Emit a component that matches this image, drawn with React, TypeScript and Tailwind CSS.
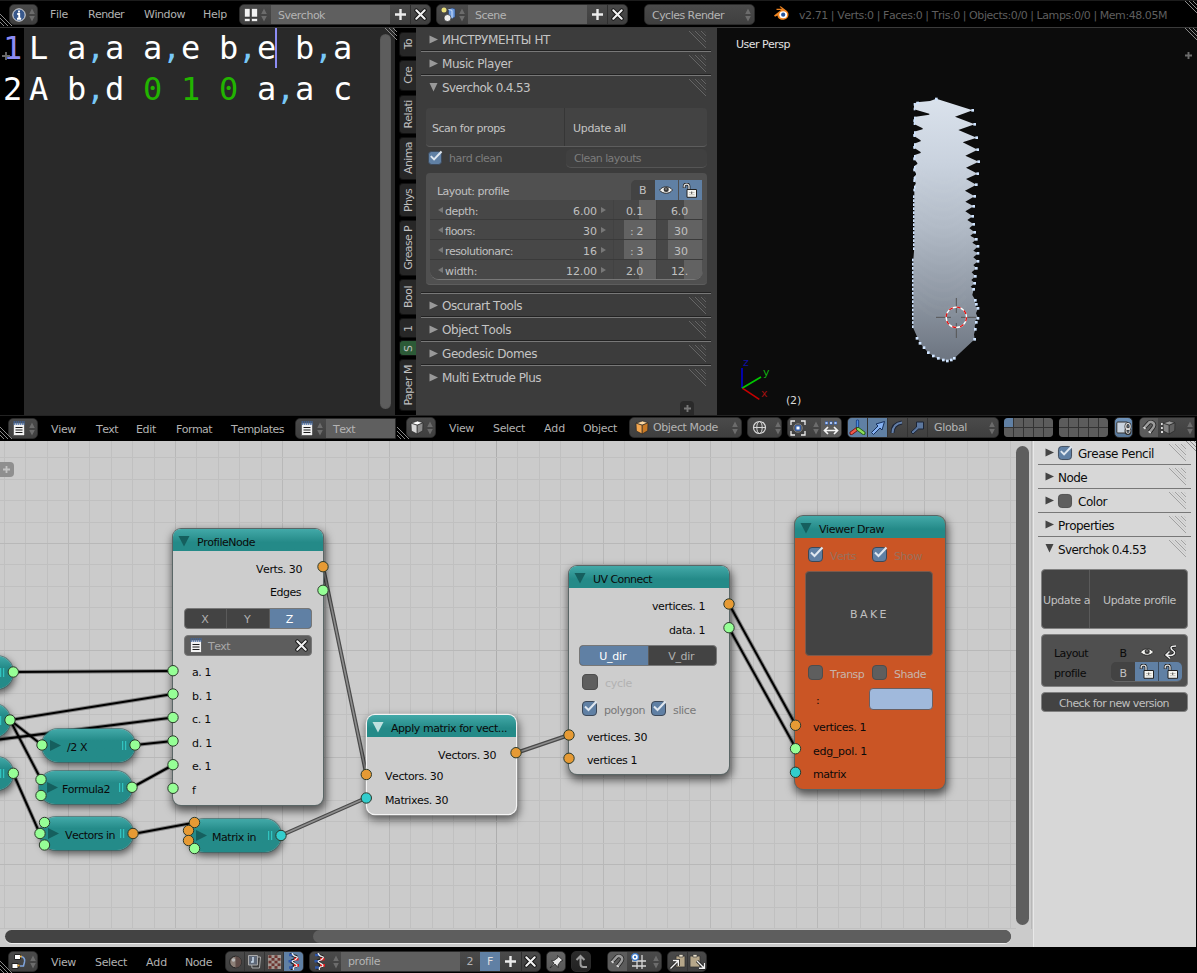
import React from "react";

const SANS = '"DejaVu Sans", sans-serif';
const MONO = '"DejaVu Sans Mono", monospace';
const ctx = document.createElement("canvas").getContext("2d")!;

function measure(s: string, size: number, family: string) {
  ctx.font = `${size}px ${family}`;
  return ctx.measureText(s).width;
}

/* Whole-pixel glyph advances, averaged over the string as tracking. */
function tracking(s: string, size: number, family: string) {
  let snapped = 0;
  let natural = 0;
  for (const c of s) {
    snapped += Math.floor((measure(c, 200, family) * size) / 200 + 0.02);
    natural += measure(c, size, family);
  }
  return (snapped - natural) / s.length;
}

type TProps = { children: string; size?: number; mono?: boolean; className?: string };
function T({ children, size = 11, mono = false, className = "" }: TProps) {
  const family = mono ? MONO : SANS;
  return (
    <span
      className={"block whitespace-pre [font-kerning:none] [font-variant-ligatures:none] " + className}
      style={{ fontSize: size, fontFamily: family, letterSpacing: tracking(children, size, family) }}
    >
      {children}
    </span>
  );
}

type Box = { className?: string; children?: React.ReactNode };

function Group({ className = "", children }: Box) {
  return (
    <div className={"flex h-[21px] shrink-0 overflow-hidden rounded-[5px] border border-[#2a2a2a] bg-linear-to-b from-[#4a4a4a] to-[#3f3f3f] text-[#b4b4b4] " + className}>
      {children}
    </div>
  );
}
function Cell({ className = "", children }: Box) {
  return <div className={"flex h-full shrink-0 items-center justify-center " + className}>{children}</div>;
}
function UpDown() {
  return (
    <svg className="ml-[3px] shrink-0" width="6" height="14" viewBox="0 0 6 14" fill="#6c6c6c">
      <path d="M3 0.5 5.8 6H.2zM3 13.5 5.8 8H.2z" />
    </svg>
  );
}
function Corner({ flip = false, className = "" }: { flip?: boolean; className?: string }) {
  return (
    <svg className={"absolute " + className} width="12" height="12" viewBox="0 0 12 12" stroke="#8b8b8b" strokeWidth="1" fill="none">
      {flip ? <path d="M0 0 12 12M4 0l8 8M8 0l4 4" /> : <path d="M0 0 12 12M0 4l8 8M0 8l4 4" />}
    </svg>
  );
}
function Plus({ s = 11, c = "#ececec", w = 2.4 }: { s?: number; c?: string; w?: number }) {
  return (
    <svg width={s} height={s} viewBox="0 0 11 11" stroke={c} strokeWidth={w}>
      <path d="M5.5 0v11M0 5.5h11" />
    </svg>
  );
}
function Cross() {
  return (
    <svg width="13" height="13" viewBox="0 0 13 13" strokeLinecap="round">
      <path d="M2.3 2.3l8.4 8.4M10.7 2.3l-8.4 8.4" stroke="#111" strokeWidth="4" />
      <path d="M2.3 2.3l8.4 8.4M10.7 2.3l-8.4 8.4" stroke="#f2f2f2" strokeWidth="2.1" />
    </svg>
  );
}
function Eye() {
  return (
    <svg width="14" height="10" viewBox="0 0 14 10">
      <path d="M.5 5.2C3 1.2 10 .2 13.5 5 10.500 9.300 4 9.300.5 5.200z" fill="#f1f1ee" stroke="#222" strokeWidth=".9" />
      <circle cx="7.200" cy="4.600" r="2.500" fill="#3a3a3a" />
      <circle cx="7" cy="4" r=".8" fill="#aaa" />
    </svg>
  );
}
function Lock() {
  return (
    <svg width="16" height="15" viewBox="0 0 16 15">
      <path d="M2.200 5V3.200Q2.200 1 4.600 1T7 3.200V7" fill="none" stroke="#222" strokeWidth="2.800" />
      <path d="M2.200 4.600V3.200Q2.200 1.200 4.600 1.200T7 3.200V7" fill="none" stroke="#e4e4e4" strokeWidth="1.300" />
      <path d="M5 6.500h9.500v7.800H5z" fill="#f4f4f0" stroke="#222" />
      <path d="M7 9.500h5.500M7 11.700h5.500" stroke="#b8b4aa" strokeWidth=".8" />
      <path d="M9.700 8.500v2.500" stroke="#555" />
    </svg>
  );
}
function TextDoc() {
  return (
    <svg width="14" height="17" viewBox="0 0 14 17">
      <path d="M1.500 3h11v11.500l-1 1h-10z" fill="#f2f2f2" stroke="#555" strokeWidth=".8" />
      <path d="M2.200 1v4M4.200 1v4M6.200 1v4M8.200 1v4M10.200 1v4M12 1v4" stroke="#40659c" strokeWidth="1.100" />
      <path d="M3.500 7.500h7M3.500 10h7M3.500 12.500h7" stroke="#1c1c1c" strokeWidth="1.100" />
    </svg>
  );
}
function Cube({ a, b, c }: { a: string; b: string; c: string }) {
  return (
    <svg width="14" height="15" viewBox="0 0 14 15" stroke="#222" strokeWidth=".6" strokeLinejoin="round">
      <path d="M1 3.200 7.500 1 13 2.800 7.200 5.200z" fill={a} />
      <path d="M1 3.200 7.200 5.200V14L1.400 11z" fill={b} />
      <path d="M13 2.800 7.200 5.200V14l5.500-3.300z" fill={c} />
    </svg>
  );
}
function Magnet() {
  return (
    <svg width="15" height="15" viewBox="0 0 15 15" fill="none">
      <path d="M2 8 6 3.600C9-.2 14 3.500 11.300 7.500L7.500 12.500" stroke="#1e1e1e" strokeWidth="4" />
      <path d="M2 8 6 3.600C9-.2 14 3.500 11.300 7.500L7.500 12.500" stroke="#9b9b9b" strokeWidth="2.500" />
      <path d="M1.500 7.200l2 1.800M6.600 11.300l2.200 1.700" stroke="#ddd" strokeWidth="1.500" />
    </svg>
  );
}
function Helix() {
  return (
    <svg className="shrink-0" width="13" height="17" viewBox="0 0 13 17" fill="none">
      <path d="M4 0q1 3 4 3t-1 4q-5 1-1 3t3 3q-4 0-4 4" stroke="#222" strokeWidth="3" />
      <path d="M2 2h4.500M1.500 8.300h4.500M2 14.500h4" stroke="#2d56a8" strokeWidth="2.400" />
      <path d="M7 6.200h4.500M7 12.300h5" stroke="#e01c1c" strokeWidth="2.800" />
      <path d="M5 0q1 3 4 3.500t-1 3.500q-5 1-1 3t2.500 3.500q-4 0-3 3.500" stroke="#f2f2f2" strokeWidth="1.200" />
    </svg>
  );
}
function Check({ on = false, s = 15, className = "" }: { on?: boolean; s?: number; className?: string }) {
  return (
    <svg className={"shrink-0 " + className} width={s} height={s} viewBox="0 0 15 15" overflow="visible">
      <rect x=".5" y=".5" width="14" height="14" rx="3.500" fill={on ? "#6080a4" : "#5e5e5e"} stroke={on ? "#3c4858" : "#4d4d4d"} />
      {on && <path d="M3 5.500 6.500 9 14.500 0.500" fill="none" stroke="#dfe7f0" strokeWidth="2.100" />}
    </svg>
  );
}
function Logo() {
  return (
    <svg width="17" height="15" viewBox="0 0 17 15">
      <path d="M1 9.500 8 4H3.500V2.800H9L6.500.8l1.200-.6L14 5c3 3 1.500 8-3.300 8.800C7 14.200 4.500 12 4.500 9.500L2 10.800z" fill="#ef8420" />
      <ellipse cx="10.200" cy="8.800" rx="3.900" ry="3.500" fill="#fff" />
      <circle cx="10.200" cy="8.700" r="2.100" fill="#25549c" />
    </svg>
  );
}

/* ---------- top header ---------- */
function InfoHeader() {
  return (
    <div className="relative flex h-[27px] shrink-0 items-start border-t border-[#1c1c1c] bg-black pt-[3px] text-[#b2b2b2]">
      <Corner className="top-[13px] left-0" />
      <Corner flip className="top-0 right-0" />
      <Group className="ml-[9px] w-[29px] items-center justify-center">
        <svg width="14" height="14" viewBox="0 0 14 14">
          <circle cx="7" cy="7" r="6.200" fill="#38588c" stroke="#e4e4e4" strokeWidth="1" />
          <path d="M7 2.600v2M5.200 6h2v4.500M5 10.700h4.200" stroke="#fff" strokeWidth="1.900" fill="none" />
        </svg>
        <UpDown />
      </Group>
      <T className="ml-3 w-[38px] leading-[22px]">File</T>
      <T className="w-14 leading-[22px]">Render</T>
      <T className="w-[59px] leading-[22px]">Window</T>
      <T className="w-9 leading-[22px]">Help</T>
      <Group className="w-[192px]">
        <Cell className="w-[31px]">
          <svg width="14" height="14" viewBox="0 0 14 14">
            <path d="M.5.5h5.500v8.500H.5zM7.500.5h6v8.500h-6zM.5 10.500h5.500v3H.5zM7.500 10.500h6v3h-6z" fill="#f1f1f1" stroke="#222" strokeWidth=".5" />
          </svg>
          <UpDown />
        </Cell>
        <Cell className="w-[119px] justify-start! bg-[#5f5f5f] pl-[7px]"><T className="mt-px leading-[19px]">Sverchok</T></Cell>
        <Cell className="w-[21px] border-r border-[#2e2e2e]"><Plus /></Cell>
        <Cell className="w-[18px]"><Cross /></Cell>
      </Group>
      <Group className="ml-[5px] w-[192px]">
        <Cell className="w-[31px]">
          <svg width="15" height="15" viewBox="0 0 15 15">
            <circle cx="3" cy="3" r="2.500" fill="#eadf7a" />
            <path d="M7.500 2.500 11 1l3 1v8l-3 1.500-3.500-1z" fill="#6a98dc" stroke="#1e3560" strokeWidth=".5" />
            <path d="M7.500 2.500l3.500.8v8" fill="none" stroke="#cfe1fb" />
            <circle cx="6.500" cy="11" r="3.500" fill="#eee" stroke="#222" strokeWidth=".6" />
          </svg>
          <UpDown />
        </Cell>
        <Cell className="w-[119px] justify-start! bg-[#5f5f5f] pl-[7px]"><T className="mt-px leading-[19px]">Scene</T></Cell>
        <Cell className="w-[21px] border-r border-[#2e2e2e]"><Plus /></Cell>
        <Cell className="w-[18px]"><Cross /></Cell>
      </Group>
      <Group className="ml-4 w-[111px] items-center justify-between pr-[3px] pl-[7px]">
        <T className="mt-px leading-[19px]">Cycles Render</T>
        <UpDown />
      </Group>
      <div className="mt-[2px] ml-[18px] w-[26px]"><Logo /></div>
      <T className="leading-[23px] text-[#5e5e5e]">v2.71 | Verts:0 | Faces:0 | Tris:0 | Objects:0/0 | Lamps:0/0 | Mem:48.05M</T>
    </div>
  );
}

/* ---------- text editor ---------- */
const CODE: { cls: string; parts: [string, string][] }[] = [
  { cls: "1", parts: [["L a", "w"], [",", "c"], ["a a", "w"], [",", "c"], ["e b", "w"], [",", "c"], ["e b", "w"], [",", "c"], ["a", "w"]] },
  { cls: "2", parts: [["A b", "w"], [",", "c"], ["d ", "w"], ["0 1 0", "n"], [" a", "w"], [",", "c"], ["a c", "w"]] },
];
const TOKEN: Record<string, string> = { w: "text-white", c: "text-[#78c8f8]", n: "text-[#22b400]" };

function TextEditor() {
  return (
    <div className="relative flex h-[388px] w-[397px] shrink-0 border-t border-[#3a3a3a] bg-[#292929]">
      <div className="flex w-6 flex-col bg-black pl-[3px]">
        <T mono size={32} className="h-[41px] leading-[41px] text-[#8c8cf4]">1</T>
        <T mono size={32} className="h-[41px] leading-[41px] text-white">2</T>
      </div>
      <div className="flex flex-col pl-[5px]">
        {CODE.map((l) => (
          <div key={l.cls} className="flex h-[41px]">
            {l.parts.map(([s, k], i) => (
              <T key={i} mono size={32} className={"leading-[41px] " + TOKEN[k]}>{s}</T>
            ))}
          </div>
        ))}
      </div>
      <div className="absolute top-0 left-[275px] h-[40px] w-[2px] bg-[#8c8cf4]" />
      <div className="absolute top-[24px] left-[2px]"><Plus s={8} c="#6a6a6a" w={2.600} /></div>
      <Corner flip className="top-0 right-0" />
      <div className="mt-[6px] mr-1 ml-auto h-[375px] w-[11px] rounded-full bg-[#5d5d5d] shadow-[inset_0_0_1px_#333]" />
      <div className="w-[2px] bg-black" />
    </div>
  );
}

/* ---------- tool shelf ---------- */
const TABS: [string, string][] = [
  ["To", "mt-[4px] h-[25px]"],
  ["Cre", "mt-[3px] h-[31px]"],
  ["Relati", "mt-[4px] h-[39px]"],
  ["Anima", "mt-[3px] h-[43px]"],
  ["Phys", "mt-[3px] h-[34px]"],
  ["Grease P", "mt-[3px] h-[56px]"],
  ["Bool", "mt-[3px] h-[36px]"],
  ["1", "mt-[3px] h-[20px]"],
  ["S", "mt-[2px] h-[16px]"],
  ["Paper M", "mt-[3px] h-[52px]"],
];

function Grip({ c = "#777" }: { c?: string }) {
  return (
    <svg className="mt-[3px] ml-auto" width="18" height="17" viewBox="0 0 18 17" stroke={c} strokeWidth="1" fill="none">
      <path d="M0 0l17 17M6 0l11 11M12 0l5 5" />
      <path d="M3 0l14 14M9 0l8 8M15 0l2 2" strokeOpacity=".25" />
    </svg>
  );
}
function Tri({ open, c }: { open?: boolean; c: string }) {
  return (
    <svg className="mt-[7px] mr-1 shrink-0" width="9" height="9" viewBox="0 0 9 9" fill={c}>
      {open ? <path d="M.5 0h8L4.500 8.500z" /> : <path d="M.5.500 9 4.500.5 8.500z" />}
    </svg>
  );
}
function Panel({ title, open, sep = true, className = "", check }: { title: string; open?: boolean; sep?: boolean; className?: string; check?: "on" | "off" }) {
  const light = check !== undefined || className.includes("light");
  return (
    <div className={"flex h-6 w-full shrink-0 items-start " + (sep ? (light ? "border-b border-[#777] " : "border-b border-[#787878] shadow-[inset_0_-1px_0_#222] ") : "")}>
      <div className={light ? "flex w-full pl-[7px]" : "flex w-full pl-2"}>
        <Tri open={open} c={light ? "#444" : "#999"} />
        {check && <Check on={check === "on"} s={14} className="mt-[5px] mr-[6px]" />}
        <T size={12} className={light ? "leading-[27px] text-[#0c0c0c]" : "leading-[25px] text-[#c4c4c4]"}>{title}</T>
        <Grip c={light ? "#a0a0a0" : "#666"} />
        <div className="w-1" />
      </div>
    </div>
  );
}

function PropRow({ name, value, a, b, int, last }: { name: string; value: string; a: string; b: string; int?: boolean; last?: boolean }) {
  return (
    <div className={"flex h-5 overflow-hidden border-b " + (last ? "rounded-b-[9px] border-[#777]" : "border-[#3a3a3a]")}>
      <div className="flex w-[183px] items-start bg-[#474747] pr-[7px] pl-2">
        <svg width="5" height="6" viewBox="0 0 5 6" fill="#777" className="mt-[7px]"><path d="M5 0v6L0 3z" /></svg>
        <T className="ml-[2px] leading-[24px]">{name}</T>
        <T className="ml-auto leading-[24px]">{value}</T>
        <svg width="5" height="6" viewBox="0 0 5 6" fill="#777" className="mt-[7px] ml-1"><path d="M0 0v6L5 3z" /></svg>
      </div>
      <div className={"flex w-[44px] border-x border-[#424242] " + (int ? "bg-linear-to-r from-[#474747] from-[10px] to-[#626262] to-[10px] pl-4" : "bg-linear-to-r from-[#474747] from-[25px] to-[#626262] to-[25px] pl-[12px]")}>
        <T className="leading-[24px]">{a}</T>
      </div>
      <div className={"flex w-[45px] " + (int ? "bg-linear-to-r from-[#474747] from-[11px] to-[#626262] to-[11px] pl-[17px]" : "bg-linear-to-r from-[#474747] from-[27px] to-[#626262] to-[27px] pl-[14px]")}>
        <T className="leading-[24px]">{b}</T>
      </div>
    </div>
  );
}

function ToolShelf() {
  return (
    <div className="flex h-[388px] w-[320px] shrink-0 border-t border-[#3a3a3a] bg-black">
      <div className="ml-[2px] flex w-[17px] flex-col">
        {TABS.map(([t, h]) => (
          <div key={t} className={"flex shrink-0 items-center justify-center rounded-l-[4px] border border-r-0 border-[#111] text-[#c0c0c0] " + (t === "S" ? "bg-[#2c5a37] " : "bg-[#272727] ") + h}>
            <T className="rotate-180 leading-[15px] [writing-mode:vertical-rl]">{t}</T>
          </div>
        ))}
      </div>
      <div className="relative flex w-[301px] flex-col bg-[#3c3c3c] pr-[6px] pl-[5px]">
        <Panel title="ИНСТРУМЕНТЫ НТ" />
        <Panel title="Music Player" />
        <Panel title="Sverchok 0.4.53" open sep={false} />
        <div className="flex h-[194px] flex-col border-b border-[#787878] pt-[8px] pr-1 pl-[5px] shadow-[inset_0_-1px_0_#222]">
          <div className="flex h-[39px] rounded-[4px] border-b border-[#5d5d5d] bg-[#434343] text-[#c4c4c4]">
            <T className="w-[139px] border-r border-[#363636] pl-[6px] leading-[42px]">Scan for props</T>
            <T className="pl-2 leading-[42px]">Update all</T>
          </div>
          <div className="mt-[2px] flex h-[19px] items-center text-[#7c7c7c]">
            <Check on s={14} className="-mt-px ml-[2px]" />
            <T className="ml-[7px] w-[117px] leading-[20px]">hard clean</T>
            <T className="h-[19px] w-[141px] rounded-[5px] border-b border-[#555] bg-[#404040] pl-2 leading-[20px]">Clean layouts</T>
          </div>
          <div className="mt-[5px] flex h-[112px] flex-col rounded-[4px] border-b border-[#5d5d5d] bg-[#505050] px-1 pt-[7px] text-[#c0c0c0]">
            <div className="flex h-5">
              <T className="w-[201px] pl-[7px] leading-[23px]">Layout: profile</T>
              <Cell className="w-6 rounded-tl-[5px] bg-[#434343] pr-px"><T className="mt-[2px]">B</T></Cell>
              <Cell className="mr-px w-[23px] bg-[#6080a4] pr-px"><Eye /></Cell>
              <Cell className="w-[23px] bg-[#6080a4] pr-px"><Lock /></Cell>
            </div>
            <PropRow name="depth:" value="6.00" a="0.1" b="6.0" />
            <PropRow name="floors:" value="30" a=": 2" b="30" int />
            <PropRow name="resolutionarc:" value="16" a=": 3" b="30" int />
            <PropRow name="width:" value="12.00" a="2.0" b="12." last />
          </div>
        </div>
        <Panel title="Oscurart Tools" />
        <Panel title="Object Tools" />
        <Panel title="Geodesic Domes" />
        <Panel title="Multi Extrude Plus" sep={false} />
        <div className="mt-auto mr-[17px] ml-auto flex h-[14px] w-[14px] items-center justify-center rounded-t-[4px] bg-[#2a2a2a]">
          <Plus s={7} c="#777" w={3} />
        </div>
      </div>
    </div>
  );
}

/* ---------- 3D viewport ---------- */
const TIPS = [[818, 91], [824, 133], [830, 173], [833, 209], [836, 245], [833, 281], [829, 314], [824, 349], [821, 379], [818, 409], [821, 433], [824, 457], [829, 478], [834, 499], [834, 520], [834, 544], [829, 565], [826, 589], [824, 610], [821, 628], [826, 661], [829, 673], [834, 685], [834, 715], [829, 727], [826, 748], [824, 778]];
const NOTCH = [[765, 110], [775, 150], [788, 187], [796, 227], [798, 263], [798, 297], [795, 332], [796, 365], [796, 394], [802, 420], [808, 445], [811, 467], [817, 488], [820, 512], [820, 532], [820, 555], [815, 577], [814, 600], [812, 620], [817, 645], [824, 667], [826, 679], [828, 700], [826, 721], [824, 738], [822, 763]];
const LEFT_NOTCH = [[688, 102], [668, 146], [662, 182], [662, 217], [652, 250], [648, 282], [647, 310]];

function buildOutline() {
  let d = "M642 72 L650 67 L690 63 L709 56";
  TIPS.forEach((t, i) => {
    d += ` L${t[0]} ${t[1]}`;
    if (NOTCH[i]) d += ` L${NOTCH[i][0]} ${NOTCH[i][1]}`;
  });
  d += " L763 835 L742 843 L712 836 L685 818 L660 790 L640 745 L640 540 L643 500 L643 330";
  for (let i = LEFT_NOTCH.length - 1; i >= 0; i--) {
    const [x, y] = LEFT_NOTCH[i];
    d += ` L642 ${y + 9} L${x} ${y + 2} L${x} ${y - 1} L642 ${y - 14}`;
  }
  return d + " Z";
}
const OUTLINE = buildOutline();
const EDGE_DOTS: number[][] = [
  ...TIPS,
  ...Array.from({ length: 17 }, (_, i) => [640, 540 + i * 12.500]),
  ...Array.from({ length: 14 }, (_, i) => [643, 350 + i * 12]),
  ...LEFT_NOTCH.flatMap(([, y]) => [[646, y + 12], [644, y + 20], [645, y - 15]]),
  [645, 73], [653, 69],
  [651, 775], [660, 790], [672, 803], [685, 818], [700, 828], [715, 835], [730, 840], [742, 843], [754, 840], [763, 835], [709, 57],
];

function Viewport() {
  return (
    <div className="relative h-[388px] w-[480px] shrink-0 border-t border-[#3a3a3a] bg-[#0c0c0c]">
      <svg className="absolute inset-0" width="480" height="387" viewBox="17 -52 480 387">
        <defs>
          <linearGradient id="skin" x1="0" y1="0" x2="0" y2="1">
            <stop offset="0" stopColor="#dae2ec" />
            <stop offset=".25" stopColor="#c9d2de" />
            <stop offset=".5" stopColor="#b0b9c5" />
            <stop offset=".75" stopColor="#8f98a4" />
            <stop offset="1" stopColor="#6c7480" />
          </linearGradient>
        </defs>
        <g transform="scale(.33333)">
          <path d={OUTLINE} fill="url(#skin)" />
          <g fill="none" stroke="#fff" strokeOpacity=".02" strokeWidth="12">
            {Array.from({ length: 16 }, (_, i) => (
              <path key={i} d={`M645 ${260 + i * 27} Q730 ${350 + i * 27} 797 ${270 + i * 27}`} />
            ))}
          </g>
          <g fill="#cfe4ff">
            {EDGE_DOTS.map(([x, y], i) => (
              <rect key={i} x={x - 4} y={y - 4} width={x < 650 ? 5 : 8} height="8" />
            ))}
          </g>
          <path d="M769 654v45M769 729v45M708 712h45M783 712h45" stroke="#555" strokeWidth="3" />
          <circle cx="769" cy="712" r="30.500" fill="none" stroke="#fff" strokeWidth="4" />
          <circle cx="769" cy="712" r="30.500" fill="none" stroke="#e01010" strokeWidth="4" strokeDasharray="12 12" />
          <path d="M126 925V864" stroke="#0000c8" strokeWidth="5" />
          <path d="M126 925l57-34" stroke="#00c800" strokeWidth="5" />
          <path d="M128 925l50 33" stroke="#c80000" strokeWidth="5" />
        </g>
      </svg>
      <T className="absolute top-[10px] left-[19px] leading-[13px] text-[#e2e2e2]">User Persp</T>
      <T className="absolute top-[328px] left-[26px] leading-[13px] text-[#1010a0]">z</T>
      <T className="absolute top-[338px] left-[46px] leading-[13px] text-[#10b010]">y</T>
      <T className="absolute top-[359px] left-[44px] leading-[13px] text-[#a01010]">x</T>
      <T className="absolute top-[366px] left-[69px] leading-[13px] text-[#d8d8d8]">(2)</T>
      <div className="absolute top-[24px] right-[5px]"><Plus s={7} c="#6c6c6c" w={3} /></div>
      <Corner flip className="top-0 right-0" />
    </div>
  );
}

/* ---------- middle headers ---------- */
function Layers({ active, className = "" }: { active?: boolean; className?: string }) {
  return (
    <div className={"grid h-[19px] w-[49px] shrink-0 grid-cols-5 grid-rows-2 gap-px overflow-hidden rounded-[4px] bg-[#333] " + className}>
      {Array.from({ length: 10 }, (_, i) => (
        <div key={i} className={active && i === 0 ? "bg-[#6080a4]" : "bg-[#5c5c5c]"} />
      ))}
    </div>
  );
}

function MidHeaders() {
  return (
    <div className="flex h-[26px] shrink-0 items-start border-t border-[#222] bg-black text-[#b2b2b2]">
      <div className="relative flex h-[25px] w-[397px] shrink-0 items-start pt-[2px]">
        <Corner className="bottom-[2px] left-0" />
        <Group className="ml-[8px] w-[30px] items-center justify-center"><TextDoc /><UpDown /></Group>
        <T className="ml-[13px] w-[45px] leading-[24px]">View</T>
        <T className="w-10 leading-[24px]">Text</T>
        <T className="w-10 leading-[24px]">Edit</T>
        <T className="w-[55px] leading-[24px]">Format</T>
        <T className="w-[64px] leading-[24px]">Templates</T>
        <Group className="w-[101px] rounded-r-none">
          <Cell className="w-[30px]"><TextDoc /><UpDown /></Cell>
          <Cell className="w-[71px] justify-start! bg-[#5f5f5f] pl-[7px]"><T className="mt-[2px] leading-[20px]">Text</T></Cell>
        </Group>
      </div>
      <div className="relative flex h-[25px] w-[800px] shrink-0 items-start pt-px">
        <Corner className="bottom-[2px] left-0" />
        <Group className="ml-[9px] w-[30px] items-center justify-center"><Cube a="#fff" b="#d8d8d8" c="#8c8c8c" /><UpDown /></Group>
        <T className="ml-[13px] w-11 leading-[23px]">View</T>
        <T className="w-[51px] leading-[23px]">Select</T>
        <T className="w-[39px] leading-[23px]">Add</T>
        <T className="w-[46px] leading-[23px]">Object</T>
        <Group className="w-[113px] items-center pr-[3px] pl-[5px]">
          <Cube a="#ffd9a0" b="#f3a64f" c="#c87a26" />
          <T className="mt-px mr-auto ml-1 leading-[20px]">Object Mode</T>
          <UpDown />
        </Group>
        <Group className="ml-[5px] w-[35px] items-center pl-1">
          <svg width="15" height="15" viewBox="0 0 15 15" fill="none" stroke="#d6d6d6">
            <circle cx="7.500" cy="7.500" r="6" strokeWidth="1.200" />
            <ellipse cx="7.500" cy="7.500" rx="2.700" ry="6" />
            <path d="M1.500 7.500h12" />
          </svg>
          <span className="w-[5px]" />
          <UpDown />
        </Group>
        <Group className="ml-[5px] w-[55px]">
          <Cell className="w-[33px]">
            <svg width="16" height="16" viewBox="0 0 16 16" fill="none">
              <path d="M1 5V1h4M11 1h4v4M15 11v4h-4M5 15H1v-4" stroke="#eee" strokeWidth="1.300" />
              <circle cx="8" cy="8" r="4.200" stroke="#888" />
              <path d="M5.800 5.800h4.400v4.400H5.800z" fill="#fff" stroke="#2c5cb0" strokeWidth="1.300" />
            </svg>
            <span className="w-1" />
            <UpDown />
          </Cell>
          <Cell className="w-5 bg-[#5c5c5c]">
            <svg width="16" height="16" viewBox="0 0 16 16" fill="none">
              <path d="M2 3h12" stroke="#2f62c0" strokeWidth="3" strokeDasharray="3 1.500" />
              <path d="M2 3h12" stroke="#dce8ff" strokeWidth="1.300" strokeDasharray="2 2.500" strokeDashoffset="-.5" />
              <path d="M5 7 1.500 10.500 5 14M11 7l3.500 3.500L11 14M2 10.500h12" stroke="#f4f4f4" strokeWidth="1.700" />
            </svg>
          </Cell>
        </Group>
        <Group className="ml-[5px] w-[152px]">
          <Cell className="w-[19px] bg-[#6080a4]">
            <svg width="17" height="17" viewBox="0 0 17 17" strokeLinecap="round">
              <path d="M8.500 9.500V2" stroke="#153a7a" strokeWidth="3.200" /><path d="M8.500 9.500V2" stroke="#4f8de0" strokeWidth="1.600" />
              <path d="M8 10l-5.500 4" stroke="#701010" strokeWidth="4" /><path d="M8 10l-5.500 4" stroke="#f05a4a" strokeWidth="2.200" />
              <path d="M9 10l5.500 4" stroke="#1d5a10" strokeWidth="4" /><path d="M9 10l5.500 4" stroke="#8ddc5a" strokeWidth="2.200" />
            </svg>
          </Cell>
          <Cell className="w-5 border-l border-[#333] bg-[#6080a4]">
            <svg width="16" height="16" viewBox="0 0 16 16"><path d="M1.500 12.500 8 6 6 4l8.500-2.500L12 10l-2-2-6.500 6.500z" fill="#86b2f2" stroke="#16305e" /></svg>
          </Cell>
          <Cell className="w-5 border-l border-[#333]">
            <svg width="15" height="15" viewBox="0 0 15 15" fill="none"><path d="M2.500 13Q2.500 4 12 2.500" stroke="#1b2436" strokeWidth="4" /><path d="M2.500 13Q2.500 4 12 2.500" stroke="#647fa8" strokeWidth="2" /></svg>
          </Cell>
          <Cell className="w-5 border-l border-[#333]">
            <svg width="15" height="15" viewBox="0 0 15 15"><path d="M1 12 6.500 7V2H13.500V9H8.500L3 14z" fill="#5c779e" stroke="#1b2436" /></svg>
          </Cell>
          <Cell className="w-[71px] justify-between! border-l border-[#333] pr-[3px] pl-[6px]"><T className="mt-px leading-[20px]">Global</T><UpDown /></Cell>
        </Group>
        <Layers active className="mt-px ml-[5px]" />
        <Layers className="mt-px ml-[6px]" />
        <Group className="ml-[6px] w-[19px] items-center justify-center from-[#6f93bb]! to-[#587798]!">
          <svg width="16" height="14" viewBox="0 0 16 14">
            <rect x=".8" y="1" width="11" height="11" rx="1" fill="#c9d3de" stroke="#333" />
            <ellipse cx="12" cy="5.500" rx="2.200" ry="3" fill="none" stroke="#333" strokeWidth="2.600" />
            <ellipse cx="12" cy="10" rx="2.200" ry="2.800" fill="none" stroke="#333" strokeWidth="2.600" />
            <ellipse cx="12" cy="5.500" rx="2.200" ry="3" fill="none" stroke="#eee" strokeWidth="1.100" />
            <ellipse cx="12" cy="9.800" rx="2" ry="2.600" fill="none" stroke="#ddd" strokeWidth="1" />
          </svg>
        </Group>
        <Group className="ml-[6px] w-[56px] rounded-r-none">
          <Cell className="w-[18px] bg-[#5c5c5c]"><Magnet /></Cell>
          <Cell className="w-[37px]">
            <span className="-mr-px grid gap-[2px]"><i className="block h-[2px] w-[2px] bg-[#ddd]" /><i className="block h-[2px] w-[2px] bg-[#ddd]" /><i className="block h-[2px] w-[2px] bg-[#ddd]" /></span>
            <Cube a="#9a9a9a" b="#848484" c="#626262" />
            <span className="w-[8px]" />
            <UpDown />
          </Cell>
        </Group>
      </div>
    </div>
  );
}

/* ---------- node editor ---------- */
const GRID_X = Array.from({ length: 49 }, (_, i) => Math.floor(4.300 + i * 21.400));
const GRID_Y = Array.from({ length: 24 }, (_, i) => Math.floor(-4.500 + i * 21.400));

type Link = [number, number, number, number, boolean?];
const LINKS: Link[] = [
  [13, 672, 173, 671], [10, 720, 173, 694], [-5, 740, 173, 717.500], [10, 720, 42, 745], [10, 720, 41, 779.500],
  [13, 773, 40, 834], [135, 745, 173, 741], [132, 787.500, 173, 765], [133, 834, 195, 822.500],
  [729, 604, 796, 725.500], [729, 628, 796, 748.500],
  [323, 567, 366.500, 775, true], [281, 835.500, 366, 798, true], [516, 753, 569, 735, true],
];
const G = "#96ff96";
const O = "#e69a34";
const C = "#32cdcd";
const SOCKETS: [number, number, string][] = [
  [13.300, 672, G], [10, 720, G], [13.300, 773.300, G], [42, 745, G], [135, 745, G], [41, 779.500, G], [41, 795.500, G], [132, 787.300, G],
  [44.500, 822.500, G], [40, 833.500, G], [44.500, 845, G], [133, 833.500, O],
  [194.500, 822.500, O], [188.500, 830.500, O], [188.500, 840.500, O], [194.500, 848.500, G], [281, 835.500, C],
  [323, 566.700, O], [323, 590.300, G], [173, 670.700, G], [173, 694, G], [173, 717.500, G], [173, 741, G], [173, 764.700, G], [173, 788.300, G],
  [516, 752.700, O], [366.300, 774.500, O], [366.300, 798, C],
  [729, 604, O], [729, 627.700, G], [569, 735, O], [569, 758.300, O],
  [795.500, 725.300, O], [795.500, 748.700, G], [795.500, 772.300, C],
];

function NodeBox({ title, className = "", selected, body = "bg-[#cdcdcd]", children }: { title: string; className?: string; selected?: boolean; body?: string; children: React.ReactNode }) {
  return (
    <div className={"absolute flex flex-col overflow-hidden rounded-[8px] text-[#0a0a0a] " + (selected ? "shadow-[0_0_0_1.200px_#f4f4f4,1px_4px_9px_2px_rgba(0,0,0,.55)] " : "shadow-[0_0_0_1px_#5a6666,1px_4px_9px_2px_rgba(0,0,0,.6)] ") + body + " " + className}>
      <div className="flex h-[22px] shrink-0 items-start bg-linear-to-b from-[#42a9a8] to-[#248a88] to-60%">
        <svg className="mt-[7px] ml-[5px]" width="12" height="11" viewBox="0 0 12 11"><path d="M.5 0h11L6 10.500z" fill={selected ? "#bfe0df" : "#155f5e"} /></svg>
        <T className="ml-[7px] leading-[28px]">{title}</T>
      </div>
      {children}
    </div>
  );
}

function Pill({ title, className = "", label = "" }: { title?: string; className?: string; label?: string }) {
  return (
    <div className={"absolute flex h-[33px] items-center rounded-[16px] bg-linear-to-b from-[#42aaa9] to-[#248b89] to-35% text-[#0a0a0a] shadow-[0_0_0_1px_rgba(40,100,100,.6),1px_3px_7px_1px_rgba(0,0,0,.55)] " + className}>
      {title && (
        <>
          <svg className="ml-[8px] shrink-0" width="11" height="11" viewBox="0 0 11 11"><path d="M0 0l11 5.500L0 11z" fill="#155f5e" /></svg>
          <T className={"leading-[13px] " + label}>{title}</T>
        </>
      )}
      <svg className="mr-[8px] ml-auto shrink-0" width="5" height="10" viewBox="0 0 5 10"><path d="M.7 0v9M3.700 0v9" stroke="#35d0cc" /></svg>
    </div>
  );
}

function Toggle({ items, active, className = "" }: { items: string[]; active: number; className?: string }) {
  return (
    <div className={"flex h-[21px] shrink-0 overflow-hidden rounded-[4px] border border-[#777] bg-[#434343] " + className}>
      {items.map((s, i) => (
        <Cell key={s} className={"flex-1 pr-[2px] " + (i === active ? "bg-[#6080a4] text-white" : "text-[#b0b0b0]") + (i ? " border-l border-[#5a5a5a]" : "")}>
          <T className="mt-[2px] leading-[19px]">{s}</T>
        </Cell>
      ))}
    </div>
  );
}

function NodeCanvas() {
  return (
    <div className="relative h-[506px] w-[1033px] shrink-0 overflow-hidden bg-[#cbcbcb]">
      <svg className="absolute inset-0" width="1033" height="506" shapeRendering="crispEdges">
        {GRID_X.map((x, i) => <rect key={x} x={x} y="0" width="1" height="488" fill={i === 23 ? "#aeaeae" : i % 5 === 3 ? "#b8b8b8" : "#c0c0c0"} />)}
        {GRID_Y.map((y, i) => <rect key={y} x="0" y={y} width="1016" height="1" fill={i % 5 === 0 ? "#b8b8b8" : "#c0c0c0"} />)}
      </svg>
      <svg className="absolute inset-0" width="1033" height="506" viewBox="0 441 1033 506">
        {LINKS.map(([a, b, c, d, grey], i) => (
          <g key={i}>
            <path d={`M${a} ${b}L${c} ${d}`} stroke={grey ? "#4a4a4a" : "#000"} strokeOpacity={grey ? 1 : 0.35} strokeWidth="4" />
            <path d={`M${a} ${b}L${c} ${d}`} stroke={grey ? "#8e8e8e" : "#000"} strokeWidth={grey ? 1.600 : 2} />
          </g>
        ))}
      </svg>

      <Pill className="top-[215px] -left-[80px] w-[93px]" />
      <Pill className="top-[263px] -left-[83px] w-[93px]" />
      <Pill className="top-[316px] -left-[80px] w-[93px]" />
      <Pill title="/2 X" label="ml-[6px] mt-[3px]" className="top-[288px] left-[42px] w-[93px]" />
      <Pill title="Formula2" label="ml-[4px] mt-[4px]" className="top-[330px] left-[39px] w-[93px]" />
      <Pill title="Vectors in" label="ml-[6px] mt-[4px]" className="top-[376px] left-[40px] w-[93px]" />
      <Pill title="Matrix in" label="ml-[5px] mt-[4px]" className="top-[378px] left-[188px] w-[93px]" />

      <NodeBox title="ProfileNode" className="top-[88px] left-[173px] h-[276px] w-[150px]">
        <T className="mt-[9px] mr-[21px] ml-auto h-5 leading-5">Verts. 30</T>
        <T className="mt-[3px] mr-[22px] ml-auto h-5 leading-5">Edges</T>
        <Toggle items={["X", "Y", "Z"]} active={2} className="mt-[5px] mr-[11px] ml-[11px]" />
        <div className="mx-[11px] mt-[6px] flex h-[21px] shrink-0 items-center rounded-[4px] border border-[#777] bg-[#5d5d5d] pr-[3px] pl-1">
          <TextDoc />
          <T className="mt-[2px] mr-auto ml-[5px] leading-[19px] text-[#a8a8a8]">Text</T>
          <Cross />
        </div>
        <div className="mt-[5px] ml-[19px]">
          {["a. 1", "b. 1", "c. 1", "d. 1", "e. 1", "f"].map((s) => <T key={s} className="h-[23.6px] leading-[23.6px]">{s}</T>)}
        </div>
      </NodeBox>

      <NodeBox selected title="Apply matrix for vect..." className="top-[274px] left-[367px] h-[99px] w-[149px]">
        <T className="mt-[9px] mr-[20px] ml-auto h-5 leading-5">Vectors. 30</T>
        <T className="mt-[1px] ml-[18px] h-5 leading-5">Vectors. 30</T>
        <T className="mt-[4px] ml-[18px] h-5 leading-5">Matrixes. 30</T>
      </NodeBox>

      <NodeBox title="UV Connect" className="top-[125px] left-[569px] h-[208px] w-[160px]">
        <T className="mt-[9px] mr-[24px] ml-auto h-5 leading-5">vertices. 1</T>
        <T className="mt-[4px] mr-[24px] ml-auto h-5 leading-5">data. 1</T>
        <Toggle items={["U_dir", "V_dir"]} active={0} className="mt-[4px] mr-[12px] ml-[10px]" />
        <div className="mt-[8px] ml-[13px] flex h-4 items-center"><Check s={16} /><T className="mt-[3px] ml-[7px] leading-[16px] text-[#b2b2b2]">cycle</T></div>
        <div className="mt-[11px] ml-[13px] flex h-[15px] items-center text-[#787878]">
          <Check on /><T className="mt-[4px] ml-[7px] w-[47px] leading-[15px]">polygon</T>
          <Check on /><T className="mt-[4px] ml-[7px] leading-[15px]">slice</T>
        </div>
        <T className="mt-[12px] ml-[18px] h-5 leading-5">vertices. 30</T>
        <T className="mt-[3px] ml-[18px] h-5 leading-5">vertices 1</T>
      </NodeBox>

      <NodeBox title="Viewer Draw" body="bg-[#ca5525]" className="top-[75px] left-[795px] h-[273px] w-[150px]">
        <div className="mt-[9px] ml-[13px] flex h-[15px] items-center text-[#98705c]">
          <Check on /><T className="mt-[3px] ml-[7px] w-[42px] leading-[15px]">Verts</T>
          <Check on /><T className="mt-[3px] ml-[7px] leading-[15px]">Show</T>
        </div>
        <div className="mt-[9px] ml-[10px] flex h-[85px] w-[128px] shrink-0 items-center justify-center rounded-[4px] border border-[#7c5a4c] bg-[#434343] pr-[2px]">
          <T className="mt-[3px] text-[#c0c0c0]">B A K E</T>
        </div>
        <div className="mt-[9px] ml-[13px] flex h-[15px] items-center text-[#c8b4aa]">
          <Check /><T className="mt-[3px] ml-[7px] w-[42px] leading-[15px]">Transp</T>
          <Check /><T className="mt-[3px] ml-[7px] leading-[15px]">Shade</T>
        </div>
        <div className="mt-[8px] flex h-[22px] shrink-0">
          <T className="ml-[21px] w-[53px] leading-[25px]">:</T>
          <div className="w-[64px] rounded-[4px] border border-[#6a5f62] bg-[#a0b9dc]" />
        </div>
        <T className="mt-[8px] ml-[18px] h-5 leading-5">vertices. 1</T>
        <T className="mt-[4px] ml-[18px] h-5 leading-5">edg_pol. 1</T>
        <T className="mt-[3px] ml-[18px] h-5 leading-5">matrix</T>
      </NodeBox>

      <svg className="absolute inset-0" width="1033" height="506" viewBox="0 441 1033 506">
        {SOCKETS.map(([x, y, f], i) => <circle key={i} cx={x} cy={y} r="5.200" fill={f} stroke="#2c3a2c" strokeWidth="1" />)}
      </svg>

      <div className="absolute top-[21px] left-0 flex h-[15px] w-[14px] items-center justify-center rounded-r-[4px] bg-[#8f8f8f] pr-[2px]"><Plus s={7} c="#c4c4c4" w={2.800} /></div>
      <div className="absolute top-[5px] right-[4px] h-[479px] w-[13px] rounded-full bg-[#5e5e5e]" />
      <div className="absolute top-[489px] left-[5px] h-[13px] w-[1006px] rounded-full bg-[#434343] shadow-[0_1px_0_#eee]">
        <div className="ml-auto h-[13px] w-[698px] rounded-full bg-[#5e5e5e]" />
      </div>
    </div>
  );
}

function SidePanel() {
  return (
    <div className="relative flex h-[506px] w-[163px] shrink-0 flex-col border-l border-[#e8e8e8] bg-[#d7d7d7] pr-[5px] pl-[4px]">
      <div className="absolute top-0 right-0 h-[10px] w-[10px] overflow-hidden"><Corner flip className="top-0 left-0" /></div>
      <Panel title="Grease Pencil" check="on" />
      <Panel title="Node" className="light" />
      <Panel title="Color" check="off" />
      <Panel title="Properties" className="light" />
      <Panel title="Sverchok 0.4.53" open sep={false} className="light" />
      <div className="mt-[8px] ml-[3px] flex h-[60px] w-[147px] shrink-0 overflow-hidden rounded-[4px] border border-[#808080] bg-[#434343] text-[#c0c0c0]">
        <T className="w-[48px] border-r border-[#5a5a5a] pl-px leading-[61px]">Update a</T>
        <T className="pl-[13px] leading-[61px]">Update profile</T>
      </div>
      <div className="mt-[5px] ml-[3px] flex h-[53px] w-[147px] shrink-0 flex-col rounded-[4px] border border-[#808080] bg-[#4f4f4f] pt-[7px] pl-3 text-[#0a0a0a]">
        <div className="flex h-5 items-center">
          <T className="mt-[2px] w-[57px] leading-[23px]">Layout</T>
          <Cell className="w-6"><T className="mt-[2px] leading-[23px]">B</T></Cell>
          <Cell className="w-6"><Eye /></Cell>
          <Cell className="w-6">
            <svg width="14" height="15" viewBox="0 0 14 15" fill="none"><path d="M12 1C5 1 6.500 4 9.500 6S9 11.500 3 10M5.500 6.500 2 10l4 3.500" stroke="#1c1c1c" strokeWidth="3" /><path d="M12 1C5 1 6.500 4 9.500 6S9 11.500 3 10M5.500 6.500 2 10l4 3.500" stroke="#eee" strokeWidth="1.500" /></svg>
          </Cell>
        </div>
        <div className="flex h-5">
          <T className="w-[57px] leading-[23px]">profile</T>
          <div className="flex h-5 overflow-hidden rounded-[5px] border-b border-[#666] bg-[#434343] text-[#c0c0c0]">
            <Cell className="w-6"><T className="mt-[3px] leading-[19px]">B</T></Cell>
            <Cell className="w-6 border-r border-[#3d4d60] bg-[#6080a4]"><Lock /></Cell>
            <Cell className="w-[23px] bg-[#6080a4]"><Lock /></Cell>
          </div>
        </div>
      </div>
      <div className="mt-[5px] ml-[3px] flex h-[20px] w-[147px] shrink-0 items-center justify-center rounded-[4px] border border-[#808080] bg-[#434343] pr-px text-[#c0c0c0]">
        <T className="mt-[3px] leading-[19px]">Check for new version</T>
      </div>
    </div>
  );
}

function Clip({ out }: { out?: boolean }) {
  return (
    <svg width="17" height="17" viewBox="0 0 17 17" fill="none">
      <path d={out ? "M1 3h10v11H1z" : "M7 3h9v11H7z"} fill="#b6a78a" stroke="#333" strokeWidth=".8" />
      <path d={out ? "M4 1.500h4v2.500H4z" : "M10 1.500h4v2.500h-4z"} fill="#e8e0cc" stroke="#333" strokeWidth=".6" />
      <path d={out ? "M8 8l7 7M10 15.300h5.500V10" : "M1.500 15.500 9 8M4 7.500h5.300V13"} stroke="#222" strokeWidth="3" />
      <path d={out ? "M8 8l7 7M10 15.300h5.500V10" : "M1.500 15.500 9 8M4 7.500h5.300V13"} stroke="#f2f2f2" strokeWidth="1.400" />
    </svg>
  );
}

function NodeHeader() {
  return (
    <div className="relative flex h-[26px] shrink-0 items-start bg-black pt-1 text-[#b2b2b2]">
      <Corner className="bottom-0 left-0" />
      <Group className="ml-[8px] w-[30px] items-center justify-center">
        <svg width="16" height="17" viewBox="0 0 16 17" fill="none">
          <path d="M10 3.500q4.500 1 3.500 5.500l-1 4H9" stroke="#7fa4dc" strokeWidth="1.500" />
          <path d="M3.500 1.500h6v5h-6zM1 10.500h6v5H1z" fill="#fff" stroke="#222" />
          <circle cx="9.800" cy="3.500" r="1.100" fill="#f0b040" /><circle cx="7.500" cy="12.500" r="1.100" fill="#f0b040" />
        </svg>
        <UpDown />
      </Group>
      <T className="ml-[13px] w-11 leading-[23px]">View</T>
      <T className="w-[51px] leading-[23px]">Select</T>
      <T className="w-[39px] leading-[23px]">Add</T>
      <T className="w-[40px] leading-[23px]">Node</T>
      <Group className="w-[79px] text-black">
        <Cell className="w-[18px]">
          <svg width="13" height="14" viewBox="0 0 13 14"><circle cx="6.500" cy="7" r="5.800" fill="#8d8078" stroke="#222" /><path d="M6.500 1.200a5.800 5.800 0 0 1 0 11.600z" fill="#5f4c48" /><circle cx="4.500" cy="5" r="1.800" fill="#bbb" /></svg>
        </Cell>
        <Cell className="w-5 border-l border-[#333]">
          <svg width="15" height="15" viewBox="0 0 15 15" stroke="#aaa"><path d="M4 3h9.500l-1 11H5z" fill="#3c3c3c" /><path d="M1.500 1.500h9v9.500h-9z" fill="#5e6878" /><path d="M6 3v5H4" stroke="#cde" fill="none" strokeWidth="1.500" /></svg>
        </Cell>
        <Cell className="w-[19px] border-l border-[#333]">
          <svg width="13" height="14" viewBox="0 0 13 14">
            <rect width="13" height="14" fill="#a29a94" />
            {Array.from({ length: 20 }, (_, i) => (Math.floor(i / 4) + i) % 2 ? null : <rect key={i} x={(i % 4) * 3 + 0.500} y={Math.floor(i / 4) * 2.700 + 0.300} width="3" height="2.700" fill="#6e3530" />)}
          </svg>
        </Cell>
        <Cell className="w-5 border-l border-[#333] bg-[#6080a4]"><Helix /></Cell>
      </Group>
      <Group className="ml-[5px] w-[232px]">
        <Cell className="w-[31px]"><Helix /><span className="w-1" /><UpDown /></Cell>
        <Cell className="w-[119px] justify-start! bg-[#5f5f5f] pl-[7px]"><T className="mt-px leading-[20px]">profile</T></Cell>
        <Cell className="w-5"><T className="mt-px leading-[20px]">2</T></Cell>
        <Cell className="w-5 bg-[#6080a4] text-[#ddd]"><T className="mt-px leading-[20px]">F</T></Cell>
        <Cell className="w-[22px] border-r border-[#2e2e2e]"><Plus /></Cell>
        <Cell className="w-[16px]"><Cross /></Cell>
      </Group>
      <Group className="ml-[5px] w-5 items-center justify-center from-[#666]! to-[#585858]!">
        <svg width="15" height="15" viewBox="0 0 15 15"><path d="M1 14l4-5-2.500-2 2.500-.5 4-3L8.500 1.500 14 6.500l-2 .5-3 4v2.500l-3-3.500z" fill="#e8e8e8" stroke="#222" strokeWidth=".8" /></svg>
      </Group>
      <Group className="ml-[5px] w-5 items-center justify-center from-[#2c2c2c]! to-[#222]!">
        <svg width="14" height="15" viewBox="0 0 14 15" fill="none"><path d="M6.500 2v8q0 3 3 3H13M2.500 6l4-4 4 4" stroke="#9c9c9c" strokeWidth="2" /></svg>
      </Group>
      <Group className="ml-4 w-[55px]">
        <Cell className="w-[19px] bg-[#5c5c5c]"><Magnet /></Cell>
        <Cell className="w-[35px]">
          <svg width="16" height="17" viewBox="0 0 16 17" fill="none"><path d="M7 2v14M12 2v14M2 8h14M2 13h14" stroke="#d8d8d8" strokeWidth="1.300" /><circle cx="5" cy="4" r="3.400" fill="#fff" stroke="#3a78c8" strokeWidth="1.300" /><circle cx="5" cy="4" r="1.200" fill="#3a78c8" /></svg>
          <span className="w-1" />
          <UpDown />
        </Cell>
      </Group>
      <Group className="ml-[5px] w-[40px]">
        <Cell className="w-[19px]"><Clip /></Cell>
        <Cell className="w-[19px] border-l border-[#333]"><Clip out /></Cell>
      </Group>
    </div>
  );
}

export default function App() {
  return (
    <div className="flex h-[973px] w-[1197px] flex-col overflow-hidden bg-black">
      <InfoHeader />
      <div className="flex h-[388px] shrink-0">
        <TextEditor />
        <ToolShelf />
        <Viewport />
      </div>
      <MidHeaders />
      <div className="flex h-[506px] shrink-0">
        <NodeCanvas />
        <SidePanel />
      </div>
      <NodeHeader />
    </div>
  );
}
